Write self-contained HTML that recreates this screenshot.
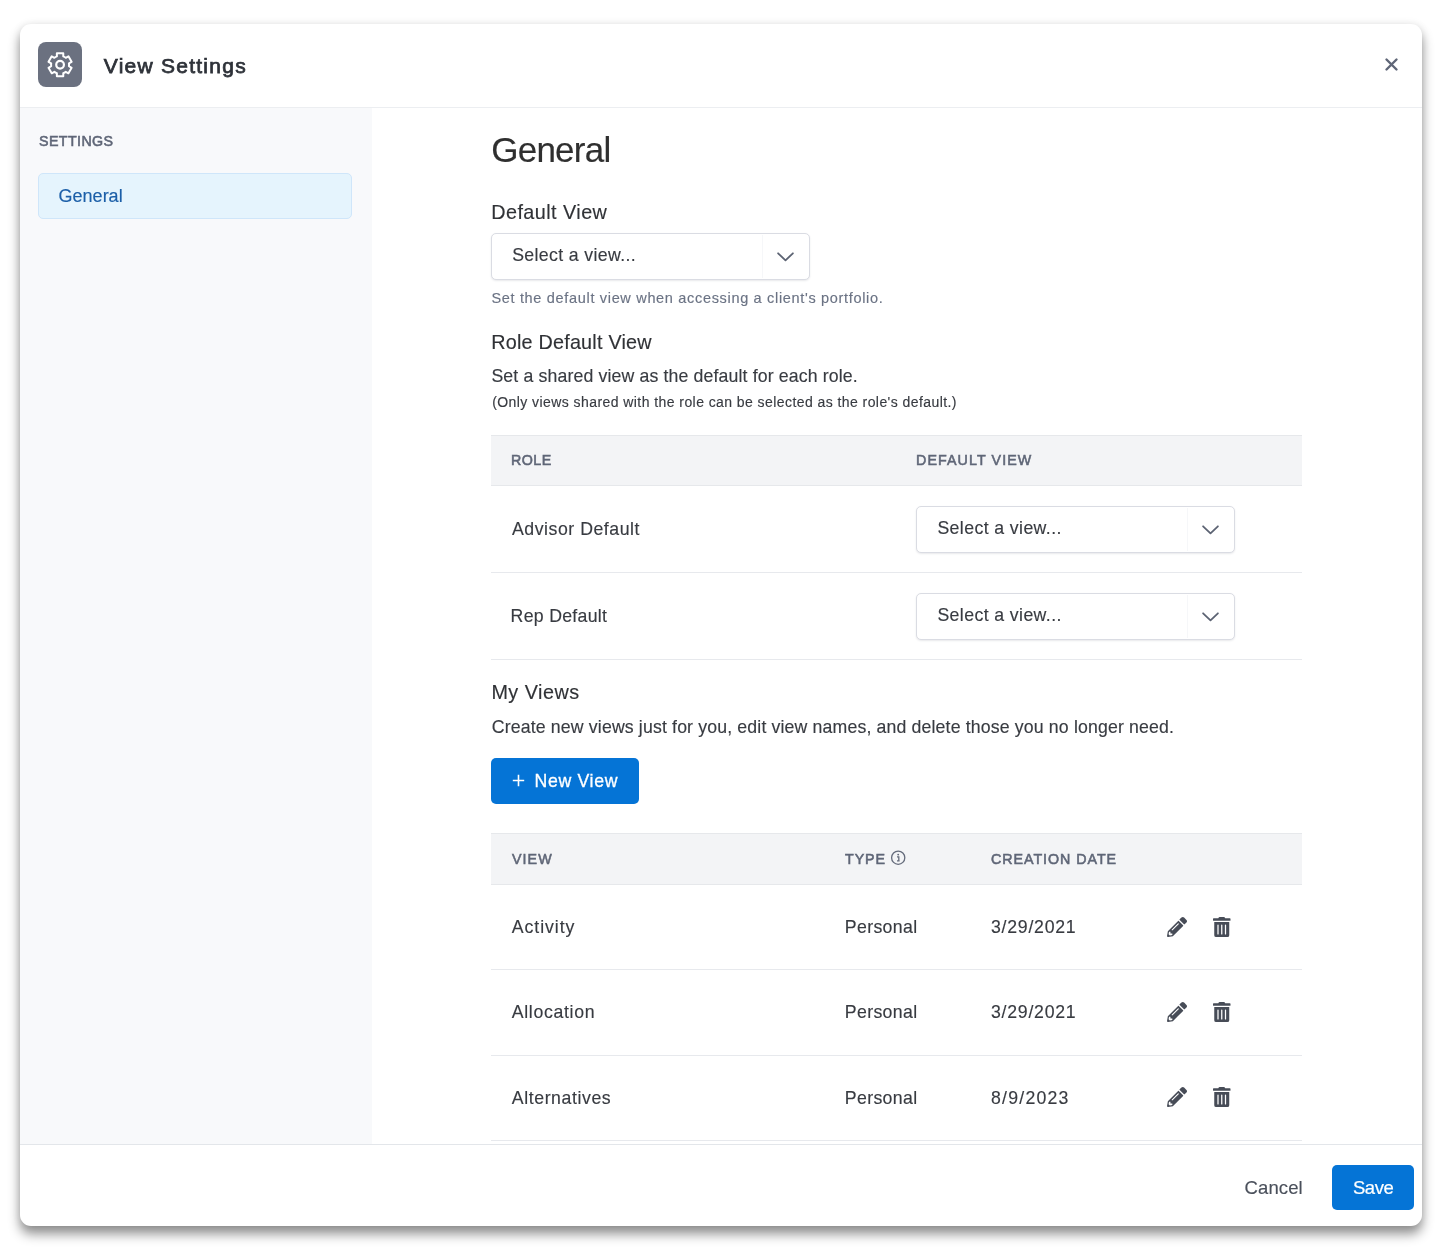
<!DOCTYPE html>
<html><head><meta charset="utf-8">
<style>
*{box-sizing:border-box;margin:0;padding:0}
html,body{width:1446px;height:1254px;overflow:hidden;background:#fff;font-family:"Liberation Sans",sans-serif}
.t{position:absolute;white-space:nowrap}
.ic{position:absolute}
.bx{position:absolute}
#modal{position:absolute;left:20px;top:24px;width:1402px;height:1202px;background:#fff;border-radius:11px;box-shadow:0 8px 12px rgba(0,0,0,.43),0 0 9px rgba(0,0,0,.08)}
.sel{position:absolute;border:1px solid #dadce3;border-radius:5px;background:#fff;box-shadow:0 1px 2px rgba(30,40,60,.10)}
.sdiv{position:absolute;top:1px;width:1px;height:43px;background:#f6f7f9}
.hline{position:absolute;height:1px;background:#e7e9ed}
</style></head><body>
<div id="modal"></div>
<div class="bx" style="left:20px;top:107px;width:1402px;height:1px;background:#eceef1"></div>
<div class="bx" style="left:20px;top:108px;width:352px;height:1036px;background:#f8f9fb"></div>
<div class="bx" style="left:20px;top:1144px;width:1402px;height:1px;background:#e3e6ea"></div>
<div class="bx" style="left:38px;top:42px;width:44px;height:44.6px;border-radius:8px;background:#6b7180"></div>
<svg class="ic" style="left:38px;top:42px" width="44" height="44" viewBox="0 0 44 44"><g fill="none" stroke="#fff" stroke-width="2" stroke-linejoin="round"><path d="M18.87 14.39 L18.87 11.30 L25.27 11.30 L25.27 14.39 A9.0 9.0 0 0 1 27.75 15.82 L27.75 15.82 L30.43 14.28 L33.63 19.82 L30.95 21.37 A9.0 9.0 0 0 1 30.95 24.23 L30.95 24.23 L33.63 25.78 L30.43 31.32 L27.75 29.78 A9.0 9.0 0 0 1 25.27 31.21 L25.27 31.21 L25.27 34.30 L18.87 34.30 L18.87 31.21 A9.0 9.0 0 0 1 16.39 29.78 L16.39 29.78 L13.71 31.32 L10.51 25.78 L13.19 24.23 A9.0 9.0 0 0 1 13.19 21.37 L13.19 21.37 L10.51 19.82 L13.71 14.28 L16.39 15.82 A9.0 9.0 0 0 1 18.87 14.39 Z"/><circle cx="22.07" cy="22.8" r="3.85" stroke-width="2.2"/></g></svg>
<svg class="ic" style="left:1384px;top:57px" width="15" height="15" viewBox="0 0 15 15"><path d="M2.5 2.5L12.5 12.5M12.5 2.5L2.5 12.5" stroke="#5f6677" stroke-width="2.4" stroke-linecap="round"/></svg>
<div class="bx" style="left:38px;top:173px;width:314px;height:46px;background:#e5f4fd;border:1px solid #cfe6fa;border-radius:5px"></div>
<div class="bx" style="left:1332px;top:1165px;width:82px;height:45px;border-radius:5px;background:#0574d6"></div>

<div class="bx" style="left:491px;top:435px;width:811px;height:51px;background:#f3f4f6;border-top:1px solid #e6e8eb;border-bottom:1px solid #e6e8eb"></div>
<div class="hline" style="left:491px;top:572px;width:811px"></div>
<div class="hline" style="left:491px;top:659px;width:811px"></div>
<div class="sel" style="left:491px;top:233px;width:319px;height:47px"><div class="sdiv" style="left:270px"></div></div><svg class="ic" style="left:771px;top:248px" width="30" height="20" viewBox="0 0 30 20"><path d="M7.1 5.3L14.5 12.3L21.9 5.3" fill="none" stroke="#5c6373" stroke-width="1.8" stroke-linecap="round" stroke-linejoin="round"/></svg>
<div class="sel" style="left:916px;top:506px;width:319px;height:47px"><div class="sdiv" style="left:270px"></div></div><svg class="ic" style="left:1196px;top:521px" width="30" height="20" viewBox="0 0 30 20"><path d="M7.1 5.3L14.5 12.3L21.9 5.3" fill="none" stroke="#5c6373" stroke-width="1.8" stroke-linecap="round" stroke-linejoin="round"/></svg>
<div class="sel" style="left:916px;top:593px;width:319px;height:47px"><div class="sdiv" style="left:270px"></div></div><svg class="ic" style="left:1196px;top:608px" width="30" height="20" viewBox="0 0 30 20"><path d="M7.1 5.3L14.5 12.3L21.9 5.3" fill="none" stroke="#5c6373" stroke-width="1.8" stroke-linecap="round" stroke-linejoin="round"/></svg>
<div class="bx" style="left:491px;top:758px;width:148px;height:46px;border-radius:5px;background:#0574d6"></div>
<svg class="ic" style="left:512px;top:774px" width="13" height="13" viewBox="0 0 13 13"><path d="M6.5 0.8V12.2M0.8 6.5H12.2" stroke="#fff" stroke-width="1.6"/></svg>

<div class="bx" style="left:491px;top:833px;width:811px;height:52px;background:#f3f4f6;border-top:1px solid #e6e8eb;border-bottom:1px solid #e6e8eb"></div>
<svg class="ic" style="left:890px;top:850px" width="16" height="16" viewBox="0 0 16 16"><circle cx="8.2" cy="7.7" r="6.6" fill="none" stroke="#646b7b" stroke-width="1.3"/><circle cx="8.2" cy="4.6" r=".95" fill="#646b7b"/><path d="M7 6.9H8.8V10.6M7 10.9H9.6" stroke="#646b7b" stroke-width="1.3" fill="none"/></svg>
<div class="hline" style="left:491px;top:969px;width:811px"></div>
<div class="hline" style="left:491px;top:1055px;width:811px"></div>
<div class="hline" style="left:491px;top:1140px;width:811px"></div>
<svg class="ic" style="left:1167.2px;top:916.6px" width="20" height="20" viewBox="0 0 512 512"><path fill="#474c57" fill-rule="evenodd" d="M497.9 142.1l-46.1 46.1c-4.7 4.7-12.3 4.7-17 0l-111-111c-4.7-4.7-4.7-12.3 0-17l46.1-46.1c18.7-18.7 49.1-18.7 67.9 0l60.1 60.1c18.8 18.7 18.8 49.1 0 67.900zM284.2 99.8L21.6 362.4.4 483.9c-2.9 16.4 11.4 30.6 27.8 27.8l121.5-21.3 262.6-262.6c4.7-4.7 4.7-12.3 0-17l-111-111c-4.8-4.700-12.4-4.7-17.1 0zM124.1 339.9c-5.5-5.5-5.5-14.3 0-19.8l154-154c5.5-5.5 14.3-5.5 19.8 0s5.5 14.3 0 19.8l-154 154c-5.5 5.5-14.3 5.5-19.8 0zM88 424h48v36.3l-64.5 11.3-31.1-31.1L51.7 376H88v48z"/></svg><svg class="ic" style="left:1213.2px;top:916.6px" width="17.5" height="20" viewBox="0 0 448 512"><path fill="#474c57" fill-rule="evenodd" d="M32 464a48 48 0 0 0 48 48h288a48 48 0 0 0 48-48V128H32zm272-256a16 16 0 0 1 32 0v224a16 16 0 0 1-32 0zm-96 0a16 16 0 0 1 32 0v224a16 16 0 0 1-32 0zm-96 0a16 16 0 0 1 32 0v224a16 16 0 0 1-32 0zM432 32H312l-9.4-18.7A24 24 0 0 0 281.1 0H166.8a23.72 23.72 0 0 0-21.4 13.3L136 32H16A16 16 0 0 0 0 48v32a16 16 0 0 0 16 16h416a16 16 0 0 0 16-16V48a16 16 0 0 0-16-16z"/></svg><svg class="ic" style="left:1167.2px;top:1001.9px" width="20" height="20" viewBox="0 0 512 512"><path fill="#474c57" fill-rule="evenodd" d="M497.9 142.1l-46.1 46.1c-4.7 4.7-12.3 4.7-17 0l-111-111c-4.7-4.7-4.7-12.3 0-17l46.1-46.1c18.7-18.7 49.1-18.7 67.9 0l60.1 60.1c18.8 18.7 18.8 49.1 0 67.900zM284.2 99.8L21.6 362.4.4 483.9c-2.9 16.4 11.4 30.6 27.8 27.8l121.5-21.3 262.6-262.6c4.7-4.7 4.7-12.3 0-17l-111-111c-4.8-4.700-12.4-4.7-17.1 0zM124.1 339.9c-5.5-5.5-5.5-14.3 0-19.8l154-154c5.5-5.5 14.3-5.5 19.8 0s5.5 14.3 0 19.8l-154 154c-5.5 5.5-14.3 5.5-19.8 0zM88 424h48v36.3l-64.5 11.3-31.1-31.1L51.7 376H88v48z"/></svg><svg class="ic" style="left:1213.2px;top:1001.9px" width="17.5" height="20" viewBox="0 0 448 512"><path fill="#474c57" fill-rule="evenodd" d="M32 464a48 48 0 0 0 48 48h288a48 48 0 0 0 48-48V128H32zm272-256a16 16 0 0 1 32 0v224a16 16 0 0 1-32 0zm-96 0a16 16 0 0 1 32 0v224a16 16 0 0 1-32 0zm-96 0a16 16 0 0 1 32 0v224a16 16 0 0 1-32 0zM432 32H312l-9.4-18.7A24 24 0 0 0 281.1 0H166.8a23.72 23.72 0 0 0-21.4 13.3L136 32H16A16 16 0 0 0 0 48v32a16 16 0 0 0 16 16h416a16 16 0 0 0 16-16V48a16 16 0 0 0-16-16z"/></svg><svg class="ic" style="left:1167.2px;top:1087.2px" width="20" height="20" viewBox="0 0 512 512"><path fill="#474c57" fill-rule="evenodd" d="M497.9 142.1l-46.1 46.1c-4.7 4.7-12.3 4.7-17 0l-111-111c-4.7-4.7-4.7-12.3 0-17l46.1-46.1c18.7-18.7 49.1-18.7 67.9 0l60.1 60.1c18.8 18.7 18.8 49.1 0 67.900zM284.2 99.8L21.6 362.4.4 483.9c-2.9 16.4 11.4 30.6 27.8 27.8l121.5-21.3 262.6-262.6c4.7-4.7 4.7-12.3 0-17l-111-111c-4.8-4.700-12.4-4.7-17.1 0zM124.1 339.9c-5.5-5.5-5.5-14.3 0-19.8l154-154c5.5-5.5 14.3-5.5 19.8 0s5.5 14.3 0 19.8l-154 154c-5.5 5.5-14.3 5.5-19.8 0zM88 424h48v36.3l-64.5 11.3-31.1-31.1L51.7 376H88v48z"/></svg><svg class="ic" style="left:1213.2px;top:1087.2px" width="17.5" height="20" viewBox="0 0 448 512"><path fill="#474c57" fill-rule="evenodd" d="M32 464a48 48 0 0 0 48 48h288a48 48 0 0 0 48-48V128H32zm272-256a16 16 0 0 1 32 0v224a16 16 0 0 1-32 0zm-96 0a16 16 0 0 1 32 0v224a16 16 0 0 1-32 0zm-96 0a16 16 0 0 1 32 0v224a16 16 0 0 1-32 0zM432 32H312l-9.4-18.7A24 24 0 0 0 281.1 0H166.8a23.72 23.72 0 0 0-21.4 13.3L136 32H16A16 16 0 0 0 0 48v32a16 16 0 0 0 16 16h416a16 16 0 0 0 16-16V48a16 16 0 0 0-16-16z"/></svg>
<div id="txt" style="position:absolute;left:0;top:0;width:1446px;height:1254px;will-change:transform">
<div class="t" id="tt" style="left:103.80px;top:55.00px;font-size:21px;line-height:21px;letter-spacing:1.250px;color:#2e3239;-webkit-text-stroke:0.75px #2e3239;">View Settings</div>
<div class="t" id="set" style="left:38.60px;top:133.00px;font-size:15.5px;line-height:15.5px;letter-spacing:0.429px;color:#5f6677;transform:scaleX(0.92);transform-origin:0 0;-webkit-text-stroke:0.6px #5f6677;">SETTINGS</div>
<div class="t" id="sg" style="left:58.60px;top:187.00px;font-size:18px;line-height:18px;letter-spacing:-0.000px;color:#1c5fa8;-webkit-text-stroke:0.15px #1c5fa8;">General</div>
<div class="t" id="hg" style="left:491.20px;top:132.00px;font-size:35px;line-height:35px;letter-spacing:-0.750px;color:#2f2f2f;-webkit-text-stroke:0.15px #2f2f2f;">General</div>
<div class="t" id="dv" style="left:491.20px;top:203.00px;font-size:19.8px;line-height:19.8px;letter-spacing:0.455px;color:#303236;-webkit-text-stroke:0.15px #303236;">Default View</div>
<div class="t" id="s1" style="left:512.20px;top:247.00px;font-size:17.7px;line-height:17.7px;letter-spacing:0.367px;color:#383b41;-webkit-text-stroke:0.15px #383b41;">Select a view...</div>
<div class="t" id="help" style="left:491.40px;top:291.00px;font-size:14.5px;line-height:14.5px;letter-spacing:0.679px;color:#6b7384;-webkit-text-stroke:0.15px #6b7384;">Set the default view when accessing a client's portfolio.</div>
<div class="t" id="rdv" style="left:491.20px;top:333.00px;font-size:19.8px;line-height:19.8px;letter-spacing:0.219px;color:#303236;-webkit-text-stroke:0.15px #303236;">Role Default View</div>
<div class="t" id="sas" style="left:491.40px;top:368.00px;font-size:17.7px;line-height:17.7px;letter-spacing:0.141px;color:#383b41;-webkit-text-stroke:0.15px #383b41;">Set a shared view as the default for each role.</div>
<div class="t" id="only" style="left:492.20px;top:395.00px;font-size:14px;line-height:14px;letter-spacing:0.430px;color:#383b41;-webkit-text-stroke:0.15px #383b41;">(Only views shared with the role can be selected as the role's default.)</div>
<div class="t" id="hrole" style="left:510.60px;top:452.00px;font-size:15.5px;line-height:15.5px;letter-spacing:0.500px;color:#5f6677;transform:scaleX(0.92);transform-origin:0 0;-webkit-text-stroke:0.6px #5f6677;">ROLE</div>
<div class="t" id="hdv" style="left:916.40px;top:452.00px;font-size:15.5px;line-height:15.5px;letter-spacing:1.182px;color:#5f6677;transform:scaleX(0.92);transform-origin:0 0;-webkit-text-stroke:0.6px #5f6677;">DEFAULT VIEW</div>
<div class="t" id="adv" style="left:512.00px;top:521.00px;font-size:17.7px;line-height:17.7px;letter-spacing:0.536px;color:#383b41;-webkit-text-stroke:0.15px #383b41;">Advisor Default</div>
<div class="t" id="s2" style="left:937.40px;top:520.00px;font-size:17.7px;line-height:17.7px;letter-spacing:0.400px;color:#383b41;-webkit-text-stroke:0.15px #383b41;">Select a view...</div>
<div class="t" id="rep" style="left:510.60px;top:608.00px;font-size:17.7px;line-height:17.7px;letter-spacing:0.300px;color:#383b41;-webkit-text-stroke:0.15px #383b41;">Rep Default</div>
<div class="t" id="s3" style="left:937.40px;top:607.00px;font-size:17.7px;line-height:17.7px;letter-spacing:0.400px;color:#383b41;-webkit-text-stroke:0.15px #383b41;">Select a view...</div>
<div class="t" id="mv" style="left:491.40px;top:683.00px;font-size:19.8px;line-height:19.8px;letter-spacing:0.500px;color:#303236;-webkit-text-stroke:0.15px #303236;">My Views</div>
<div class="t" id="cnv" style="left:491.80px;top:719.00px;font-size:17.7px;line-height:17.7px;letter-spacing:0.151px;color:#383b41;-webkit-text-stroke:0.15px #383b41;">Create new views just for you, edit view names, and delete those you no longer need.</div>
<div class="t" id="nv" style="left:534.60px;top:773.00px;font-size:17.7px;line-height:17.7px;letter-spacing:0.643px;color:#ffffff;-webkit-text-stroke:0.3px #ffffff;">New View</div>
<div class="t" id="hview" style="left:511.80px;top:851.00px;font-size:15.5px;line-height:15.5px;letter-spacing:1.167px;color:#5f6677;transform:scaleX(0.92);transform-origin:0 0;-webkit-text-stroke:0.6px #5f6677;">VIEW</div>
<div class="t" id="htype" style="left:844.80px;top:851.00px;font-size:15.5px;line-height:15.5px;letter-spacing:1.000px;color:#5f6677;transform:scaleX(0.92);transform-origin:0 0;-webkit-text-stroke:0.6px #5f6677;">TYPE</div>
<div class="t" id="hcd" style="left:990.60px;top:851.00px;font-size:15.5px;line-height:15.5px;letter-spacing:1.042px;color:#5f6677;transform:scaleX(0.92);transform-origin:0 0;-webkit-text-stroke:0.6px #5f6677;">CREATION DATE</div>
<div class="t" id="n0" style="left:511.80px;top:919.00px;font-size:17.7px;line-height:17.7px;letter-spacing:0.929px;color:#383b41;-webkit-text-stroke:0.15px #383b41;">Activity</div>
<div class="t" id="p0" style="left:844.80px;top:919.00px;font-size:17.7px;line-height:17.7px;letter-spacing:0.357px;color:#383b41;-webkit-text-stroke:0.15px #383b41;">Personal</div>
<div class="t" id="d0" style="left:991.00px;top:919.00px;font-size:17.7px;line-height:17.7px;letter-spacing:0.750px;color:#383b41;-webkit-text-stroke:0.15px #383b41;">3/29/2021</div>
<div class="t" id="n1" style="left:511.80px;top:1004.00px;font-size:17.7px;line-height:17.7px;letter-spacing:0.667px;color:#383b41;-webkit-text-stroke:0.15px #383b41;">Allocation</div>
<div class="t" id="p1" style="left:844.80px;top:1004.00px;font-size:17.7px;line-height:17.7px;letter-spacing:0.357px;color:#383b41;-webkit-text-stroke:0.15px #383b41;">Personal</div>
<div class="t" id="d1" style="left:991.00px;top:1004.00px;font-size:17.7px;line-height:17.7px;letter-spacing:0.750px;color:#383b41;-webkit-text-stroke:0.15px #383b41;">3/29/2021</div>
<div class="t" id="n2" style="left:511.80px;top:1090.00px;font-size:17.7px;line-height:17.7px;letter-spacing:0.591px;color:#383b41;-webkit-text-stroke:0.15px #383b41;">Alternatives</div>
<div class="t" id="p2" style="left:844.80px;top:1090.00px;font-size:17.7px;line-height:17.7px;letter-spacing:0.357px;color:#383b41;-webkit-text-stroke:0.15px #383b41;">Personal</div>
<div class="t" id="d2" style="left:991.00px;top:1090.00px;font-size:17.7px;line-height:17.7px;letter-spacing:1.229px;color:#383b41;-webkit-text-stroke:0.15px #383b41;">8/9/2023</div>
<div class="t" id="cancel" style="left:1244.60px;top:1179.00px;font-size:18.5px;line-height:18.5px;letter-spacing:0.100px;color:#4a505b;-webkit-text-stroke:0.15px #4a505b;">Cancel</div>
<div class="t" id="save" style="left:1353.00px;top:1179.00px;font-size:18.5px;line-height:18.5px;letter-spacing:-0.500px;color:#ffffff;-webkit-text-stroke:0.2px #ffffff;">Save</div>
</div>
</body></html>
